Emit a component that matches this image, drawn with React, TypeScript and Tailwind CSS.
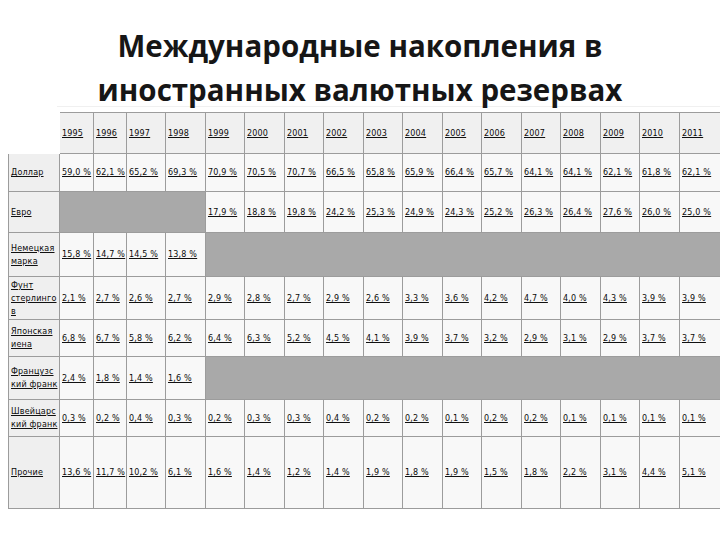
const years = ['1995', '1996', '1997', '1998', '1999', '2000', '2001', '2002', '2003', '2004', '2005', '2006', '2007', '2008', '2009', '2010', '2011']

type Row = {
  label: string[]
  h: string
  cells: (string | { gray: number })[]
}

const rows: Row[] = [
  {
    label: ['Доллар'],
    h: 'h-[38px]',
    cells: ['59,0 %', '62,1 %', '65,2 %', '69,3 %', '70,9 %', '70,5 %', '70,7 %', '66,5 %', '65,8 %', '65,9 %', '66,4 %', '65,7 %', '64,1 %', '64,1 %', '62,1 %', '61,8 %', '62,1 %'],
  },
  {
    label: ['Евро'],
    h: 'h-[41px]',
    cells: [{ gray: 4 }, '17,9 %', '18,8 %', '19,8 %', '24,2 %', '25,3 %', '24,9 %', '24,3 %', '25,2 %', '26,3 %', '26,4 %', '27,6 %', '26,0 %', '25,0 %'],
  },
  {
    label: ['Немецкая', 'марка'],
    h: 'h-[44px]',
    cells: ['15,8 %', '14,7 %', '14,5 %', '13,8 %', { gray: 13 }],
  },
  {
    label: ['Фунт', 'стерлинго', 'в'],
    h: 'h-[43px]',
    cells: ['2,1 %', '2,7 %', '2,6 %', '2,7 %', '2,9 %', '2,8 %', '2,7 %', '2,9 %', '2,6 %', '3,3 %', '3,6 %', '4,2 %', '4,7 %', '4,0 %', '4,3 %', '3,9 %', '3,9 %'],
  },
  {
    label: ['Японская', 'иена'],
    h: 'h-[37px]',
    cells: ['6,8 %', '6,7 %', '5,8 %', '6,2 %', '6,4 %', '6,3 %', '5,2 %', '4,5 %', '4,1 %', '3,9 %', '3,7 %', '3,2 %', '2,9 %', '3,1 %', '2,9 %', '3,7 %', '3,7 %'],
  },
  {
    label: ['Французс', 'кий франк'],
    h: 'h-[43px]',
    cells: ['2,4 %', '1,8 %', '1,4 %', '1,6 %', { gray: 13 }],
  },
  {
    label: ['Швейцарс', 'кий франк'],
    h: 'h-[37px]',
    cells: ['0,3 %', '0,2 %', '0,4 %', '0,3 %', '0,2 %', '0,3 %', '0,3 %', '0,4 %', '0,2 %', '0,2 %', '0,1 %', '0,2 %', '0,2 %', '0,1 %', '0,1 %', '0,1 %', '0,1 %'],
  },
  {
    label: ['Прочие'],
    h: 'h-[72px]',
    cells: ['13,6 %', '11,7 %', '10,2 %', '6,1 %', '1,6 %', '1,4 %', '1,2 %', '1,4 %', '1,9 %', '1,8 %', '1,9 %', '1,5 %', '1,8 %', '2,2 %', '3,1 %', '4,4 %', '5,1 %'],
  },
]

const spans: Record<number, string> = {
  4: 'col-span-4',
  13: 'col-span-13',
}

function Link({ children }: { children: React.ReactNode }) {
  return <span className="underline decoration-[#111] underline-offset-[1px] whitespace-nowrap">{children}</span>
}

export default function App() {
  return (
    <div className="w-[720px] h-[540px] overflow-hidden bg-white" style={{ fontFamily: '"DejaVu Sans", Verdana, sans-serif' }}>
      {/* Title */}
      <div className="pt-[24px] h-[106px]">
        <h1
          className="text-center text-[29.5px] leading-[44px] font-bold text-[#161616]"
          style={{ fontFamily: '"Open Sans", "Liberation Sans", sans-serif' }}
        >
          Международные накопления в
          <br />
          иностранных валютных резервах
        </h1>
      </div>
      <div className="ml-[57px] h-[6px] border-t border-[#f0f0f0]" />

      {/* Table */}
      <div className="ml-[8px] grid grid-cols-[52px_34px_33px_39px_40px_39px_40px_39px_40px_39px_40px_39px_40px_39px_40px_39px_40px_42px] text-[8px] leading-[13px] tracking-[0.2px] text-[#0a0a0a]">
        {/* header row */}
        <div className="h-[42px]" />
        {years.map((y) => (
          <div key={y} className="h-[42px] flex items-center pl-[2px] bg-[#f0f0f0] border-t border-r border-b border-[#9c9c9c]">
            <Link>{y}</Link>
          </div>
        ))}

        {rows.map((row, ri) => (
          <div key={ri} className="contents">
            <div className={`${row.h} flex flex-col justify-center pl-[2px] bg-[#efefef] border-l border-r border-b border-[#9c9c9c] overflow-hidden`}>
              {row.label.map((l) => (
                <Link key={l}>{l}</Link>
              ))}
            </div>
            {row.cells.map((c, ci) =>
              typeof c === 'string' ? (
                <div key={ci} className={`${row.h} flex items-center pl-[2px] bg-[#f8f8f8] border-r border-b border-[#9c9c9c]`}>
                  <Link>{c}</Link>
                </div>
              ) : (
                <div key={ci} className={`${row.h} ${spans[c.gray]} bg-[#a9a9a9] border-r border-b border-[#9c9c9c]`} />
              )
            )}
          </div>
        ))}
      </div>
    </div>
  )
}
